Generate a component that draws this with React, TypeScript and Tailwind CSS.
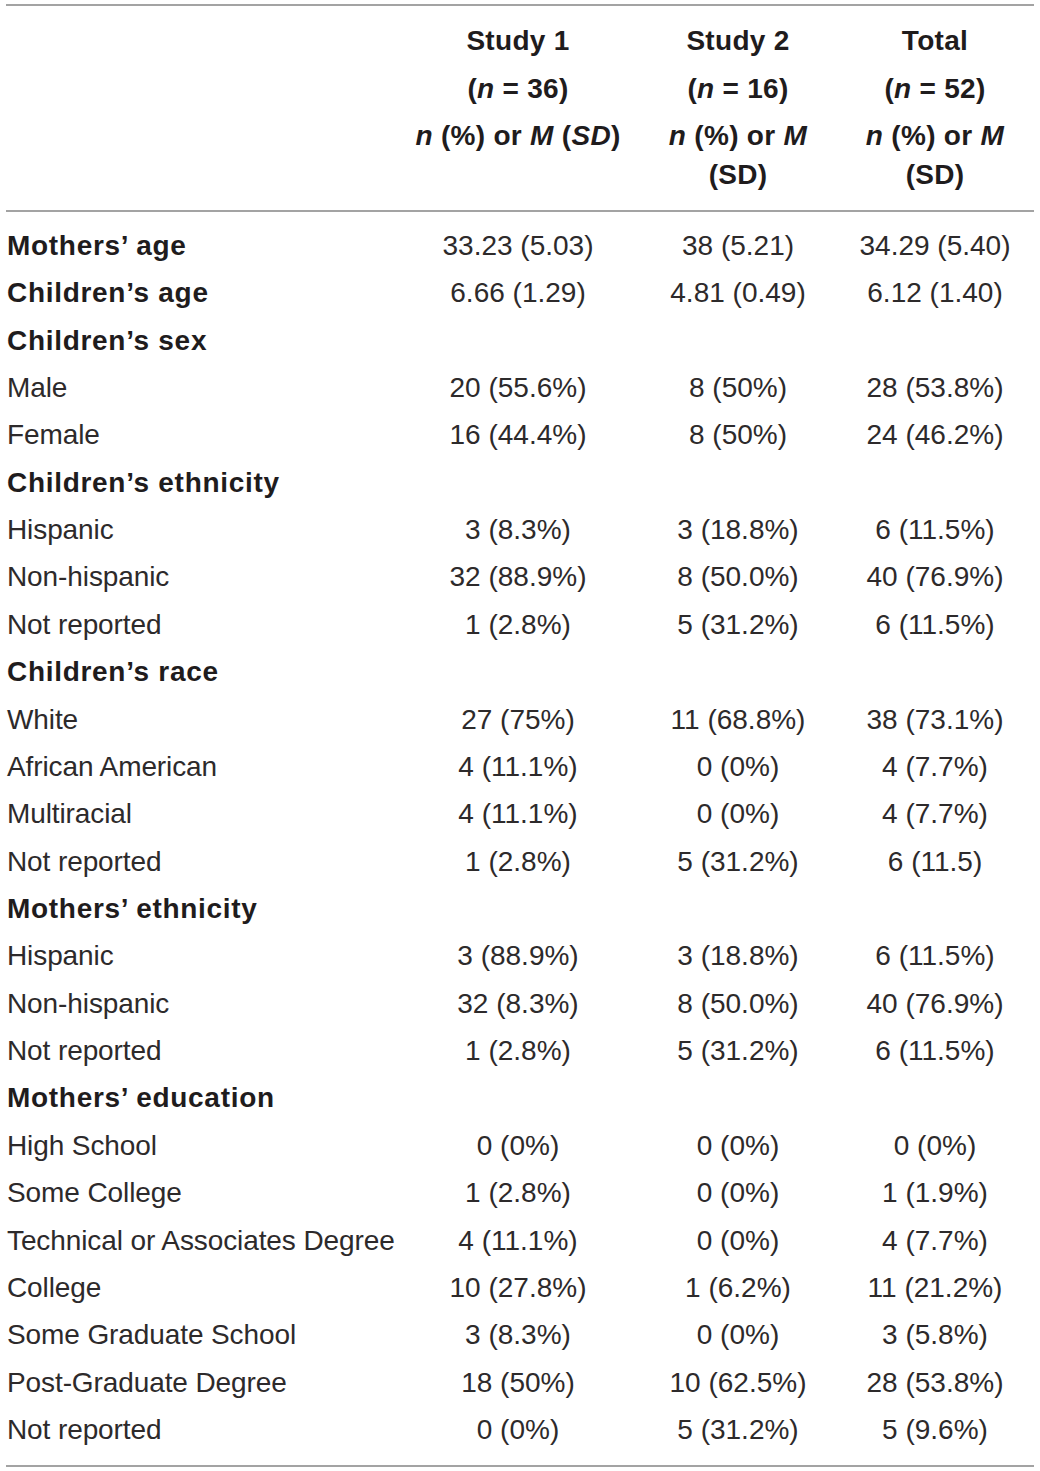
import React from 'react';

type Row = { label: string; bold?: boolean; cells: string[] };

const rows: Row[] = [
  { label: 'Mothers’ age', bold: true, cells: ['33.23 (5.03)', '38 (5.21)', '34.29 (5.40)'] },
  { label: 'Children’s age', bold: true, cells: ['6.66 (1.29)', '4.81 (0.49)', '6.12 (1.40)'] },
  { label: 'Children’s sex', bold: true, cells: ['', '', ''] },
  { label: 'Male', cells: ['20 (55.6%)', '8 (50%)', '28 (53.8%)'] },
  { label: 'Female', cells: ['16 (44.4%)', '8 (50%)', '24 (46.2%)'] },
  { label: 'Children’s ethnicity', bold: true, cells: ['', '', ''] },
  { label: 'Hispanic', cells: ['3 (8.3%)', '3 (18.8%)', '6 (11.5%)'] },
  { label: 'Non-hispanic', cells: ['32 (88.9%)', '8 (50.0%)', '40 (76.9%)'] },
  { label: 'Not reported', cells: ['1 (2.8%)', '5 (31.2%)', '6 (11.5%)'] },
  { label: 'Children’s race', bold: true, cells: ['', '', ''] },
  { label: 'White', cells: ['27 (75%)', '11 (68.8%)', '38 (73.1%)'] },
  { label: 'African American', cells: ['4 (11.1%)', '0 (0%)', '4 (7.7%)'] },
  { label: 'Multiracial', cells: ['4 (11.1%)', '0 (0%)', '4 (7.7%)'] },
  { label: 'Not reported', cells: ['1 (2.8%)', '5 (31.2%)', '6 (11.5)'] },
  { label: 'Mothers’ ethnicity', bold: true, cells: ['', '', ''] },
  { label: 'Hispanic', cells: ['3 (88.9%)', '3 (18.8%)', '6 (11.5%)'] },
  { label: 'Non-hispanic', cells: ['32 (8.3%)', '8 (50.0%)', '40 (76.9%)'] },
  { label: 'Not reported', cells: ['1 (2.8%)', '5 (31.2%)', '6 (11.5%)'] },
  { label: 'Mothers’ education', bold: true, cells: ['', '', ''] },
  { label: 'High School', cells: ['0 (0%)', '0 (0%)', '0 (0%)'] },
  { label: 'Some College', cells: ['1 (2.8%)', '0 (0%)', '1 (1.9%)'] },
  { label: 'Technical or Associates Degree', cells: ['4 (11.1%)', '0 (0%)', '4 (7.7%)'] },
  { label: 'College', cells: ['10 (27.8%)', '1 (6.2%)', '11 (21.2%)'] },
  { label: 'Some Graduate School', cells: ['3 (8.3%)', '0 (0%)', '3 (5.8%)'] },
  { label: 'Post-Graduate Degree', cells: ['18 (50%)', '10 (62.5%)', '28 (53.8%)'] },
  { label: 'Not reported', cells: ['0 (0%)', '5 (31.2%)', '5 (9.6%)'] },
];

const grid = 'grid grid-cols-[402px_220px_220px_174px]';

function HeaderCell({ title, n, wrap }: { title: string; n: number; wrap?: boolean }) {
  return (
    <div className="flex flex-col gap-[8.5px] text-center font-bold leading-[39px] tracking-[0.3px] text-[#1f1c1d]">
      <p>{title}</p>
      <p>
        (<i>n</i> = {n})
      </p>
      {wrap ? (
        <p>
          <i>n</i> (%) or <i>M</i>
          <br />
          (SD)
        </p>
      ) : (
        <p>
          <i>n</i> (%) or <i>M</i> (<i>SD</i>)
        </p>
      )}
    </div>
  );
}

export default function App() {
  return (
    <div className="min-h-screen bg-white pt-[4px] px-[6px] font-['Liberation_Sans',Arial,sans-serif] text-[28px] text-[#2d2a2b]">
      <div className="w-[1028px]">
        <div className="h-[2px] bg-[#a3a3a3]" />
        <div className={`${grid} pt-[15px] pb-[16px]`}>
          <div />
          <HeaderCell title="Study 1" n={36} />
          <HeaderCell title="Study 2" n={16} wrap />
          <HeaderCell title="Total" n={52} wrap />
        </div>
        <div className="h-[2px] bg-[#a3a3a3]" />
        <div className="pt-[10.3px] pb-[11.3px]">
          {rows.map((r, i) => (
            <div key={i} className={`${grid} h-[47.36px] items-center`}>
              <div
                className={`pl-[1px] whitespace-nowrap ${
                  r.bold ? 'font-bold tracking-[0.7px] text-[#1f1c1d]' : 'tracking-[-0.1px]'
                }`}
              >
                {r.label}
              </div>
              {r.cells.map((c, j) => (
                <div key={j} className="text-center whitespace-nowrap">
                  {c}
                </div>
              ))}
            </div>
          ))}
        </div>
        <div className="h-[2px] bg-[#a3a3a3]" />
      </div>
    </div>
  );
}
